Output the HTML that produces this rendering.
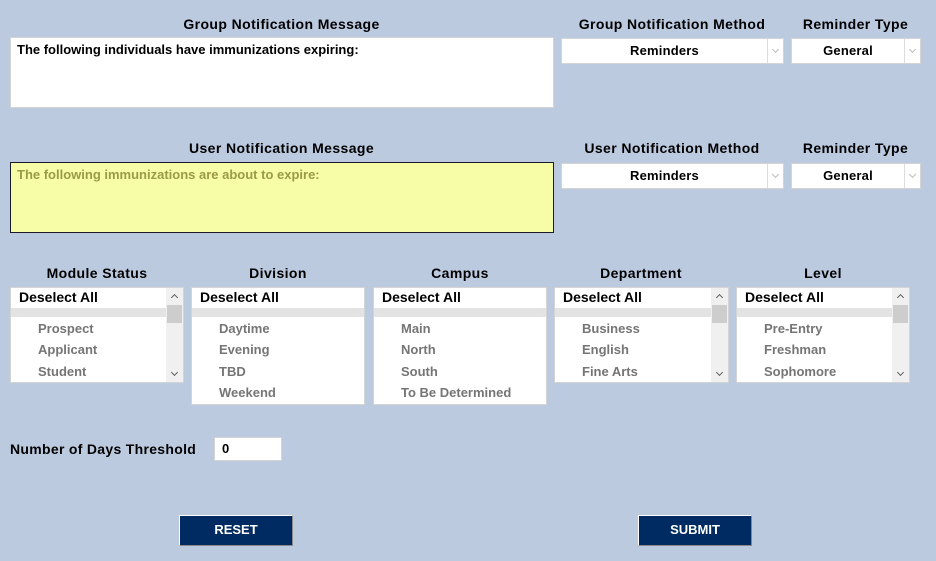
<!DOCTYPE html>
<html><head><meta charset="utf-8"><style>
*{box-sizing:border-box;margin:0;padding:0}
body{width:936px;height:561px;background:#bccae0;font-family:"Liberation Sans",Arial,sans-serif;position:relative;overflow:hidden;color:#000}
.a{position:absolute}
.lbl{font-weight:bold;font-size:14px;text-align:center;line-height:16px;letter-spacing:0.4px}
.ta{background:#fff;border:1px solid #d4d4d4;font-size:13px;font-weight:bold;padding:4px 6px}
.sel{background:#fff;border:1px solid #d4d4d4;font-size:13px;font-weight:bold;text-align:center;line-height:24px;padding-right:16px;letter-spacing:0.2px}
.sel .ar{position:absolute;right:0;top:0;bottom:0;width:16px;border-left:1px solid #ddd}
.chev{position:absolute;width:5px;height:5px;border-right:1px solid #999;border-bottom:1px solid #999;transform:rotate(45deg);left:50%;margin-left:-3px}
.sel .chev{top:8px;border-color:#bbb}
.list{background:#fff;border:1px solid #d4d4d4;overflow:hidden}
.list .ds{height:20px;line-height:19px;font-size:14px;font-weight:bold;padding-left:8px}
.list .gb{height:9px;background:#e3e3e3}
.list .it{font-size:13px;font-weight:bold;color:#757575;padding-left:27px;height:21.3px;line-height:21px}
.list .first{margin-top:1px}
.sb{position:absolute;right:0;top:0;bottom:0;width:17px;background:#f0f0f0}
.sb .th{position:absolute;left:1px;right:1px;top:17px;height:18px;background:#cdcdcd}
.sb .cu{top:7px;transform:rotate(-135deg);border-color:#606060}
.sb .cd{bottom:7px;border-color:#606060}
.btn{background:#002b62;border:1px solid #fff;border-right-color:#888;border-bottom-color:#888;color:#fff;font-size:13px;font-weight:bold;text-align:center;line-height:28px}
</style></head><body>
<div class="a lbl" style="left:10px;top:16px;width:543px">Group Notification Message</div>
<div class="a lbl" style="left:561px;top:16px;width:222px">Group Notification Method</div>
<div class="a lbl" style="left:791px;top:16px;width:129px">Reminder Type</div>
<div class="a ta" style="left:10px;top:37px;width:544px;height:71px">The following individuals have immunizations expiring:</div>
<div class="a sel" style="left:561px;top:38px;width:223px;height:26px">Reminders<span class="ar"><i class="chev"></i></span></div>
<div class="a sel" style="left:791px;top:38px;width:130px;height:26px">General<span class="ar"><i class="chev"></i></span></div>

<div class="a lbl" style="left:10px;top:140px;width:543px">User Notification Message</div>
<div class="a lbl" style="left:561px;top:140px;width:222px">User Notification Method</div>
<div class="a lbl" style="left:791px;top:140px;width:129px">Reminder Type</div>
<div class="a ta" style="left:10px;top:162px;width:544px;height:71px;background:#f7fca6;border:1px solid #1a1a2a;color:#9a9a48">The following immunizations are about to expire:</div>
<div class="a sel" style="left:561px;top:163px;width:223px;height:26px">Reminders<span class="ar"><i class="chev"></i></span></div>
<div class="a sel" style="left:791px;top:163px;width:130px;height:26px">General<span class="ar"><i class="chev"></i></span></div>

<div class="a lbl" style="left:10px;top:265px;width:174px">Module Status</div>
<div class="a lbl" style="left:191px;top:265px;width:174px">Division</div>
<div class="a lbl" style="left:373px;top:265px;width:174px">Campus</div>
<div class="a lbl" style="left:554px;top:265px;width:174px">Department</div>
<div class="a lbl" style="left:736px;top:265px;width:174px">Level</div>

<div class="a list" style="left:10px;top:287px;width:174px;height:96px">
<div class="ds">Deselect All</div><div class="gb"></div>
<div class="it first">Prospect</div><div class="it">Applicant</div><div class="it">Student</div>
<div class="sb"><i class="chev cu"></i><div class="th"></div><i class="chev cd"></i></div></div>
<div class="a list" style="left:191px;top:287px;width:174px;height:118px">
<div class="ds">Deselect All</div><div class="gb"></div>
<div class="it first">Daytime</div><div class="it">Evening</div><div class="it">TBD</div><div class="it">Weekend</div></div>
<div class="a list" style="left:373px;top:287px;width:174px;height:118px">
<div class="ds">Deselect All</div><div class="gb"></div>
<div class="it first">Main</div><div class="it">North</div><div class="it">South</div><div class="it">To Be Determined</div></div>
<div class="a list" style="left:554px;top:287px;width:175px;height:96px">
<div class="ds">Deselect All</div><div class="gb"></div>
<div class="it first">Business</div><div class="it">English</div><div class="it">Fine Arts</div>
<div class="sb"><i class="chev cu"></i><div class="th"></div><i class="chev cd"></i></div></div>
<div class="a list" style="left:736px;top:287px;width:174px;height:96px">
<div class="ds">Deselect All</div><div class="gb"></div>
<div class="it first">Pre-Entry</div><div class="it">Freshman</div><div class="it">Sophomore</div>
<div class="sb"><i class="chev cu"></i><div class="th"></div><i class="chev cd"></i></div></div>

<div class="a" style="left:10px;top:441px;font-size:14px;font-weight:bold;letter-spacing:0.3px">Number of Days Threshold</div>
<div class="a" style="left:214px;top:437px;width:68px;height:24px;background:#fff;border:1px solid #d4d4d4;font-size:13px;font-weight:bold;padding:3px 7px">0</div>

<div class="a btn" style="left:179px;top:515px;width:114px;height:31px">RESET</div>
<div class="a btn" style="left:638px;top:515px;width:114px;height:31px">SUBMIT</div>
</body></html>
